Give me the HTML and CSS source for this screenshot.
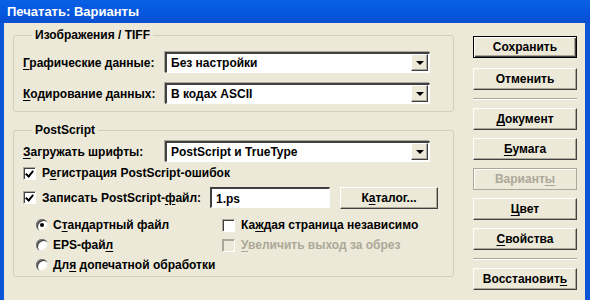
FILE: index.html
```html
<!DOCTYPE html>
<html lang="ru">
<head>
    <meta charset="UTF-8">
    <title>Печатать: Варианты</title>
    <link rel="stylesheet" href="styles.css">
</head>
<body>
    <div class="window">
        <div class="titlebar">Печатать: Варианты</div>
        <div class="client">
            <div class="groups">
                <fieldset class="group group-tiff">
                    <legend>Изображения / TIFF</legend>
                    <div class="row">
                        <span class="label"><u>Г</u>рафические данные:</span>
                        <div class="combo"><span>Без настройки</span><i class="arrow"></i></div>
                    </div>
                    <div class="row row-second">
                        <span class="label"><u>К</u>одирование данных:</span>
                        <div class="combo"><span>В кодах ASCII</span><i class="arrow"></i></div>
                    </div>
                </fieldset>

                <fieldset class="group group-ps">
                    <legend>PostScript</legend>
                    <div class="row">
                        <span class="label"><u>З</u>агружать шрифты:</span>
                        <div class="combo"><span>PostScript и TrueType</span><i class="arrow"></i></div>
                    </div>
                    <div class="check-row row-errors">
                        <span class="checkbox checked"></span>
                        <span>Р<u>е</u>гистрация PostScript-ошибок</span>
                    </div>
                    <div class="check-row row-file">
                        <span class="checkbox checked"></span>
                        <span class="file-label">Записать PostScript-<u>ф</u>айл:</span>
                        <div class="textbox">1.ps</div>
                        <div class="btn btn-catalog">К<u>а</u>талог...</div>
                    </div>
                    <div class="options">
                        <div class="option-col">
                            <div class="check-row"><span class="radio checked"></span><span>С<u>т</u>андартный файл</span></div>
                            <div class="check-row"><span class="radio"></span><span>EPS-фай<u>л</u></span></div>
                            <div class="check-row"><span class="radio"></span><span>Дл<u>я</u> допечатной обработки</span></div>
                        </div>
                        <div class="option-col option-right">
                            <div class="check-row"><span class="checkbox"></span><span>Ка<u>ж</u>дая страница независимо</span></div>
                            <div class="check-row disabled"><span class="checkbox"></span><span><u>У</u>величить выход за обрез</span></div>
                        </div>
                    </div>
                </fieldset>
            </div>

            <div class="buttons">
                <div class="btn btn-default">Сохранить</div>
                <div class="btn">Отменить</div>
                <div class="separator"></div>
                <div class="btn"><u>Д</u>окумент</div>
                <div class="btn"><u>Б</u>умага</div>
                <div class="btn btn-disabled">Вариант<u>ы</u></div>
                <div class="btn"><u>Ц</u>вет</div>
                <div class="btn"><u>С</u>войства</div>
                <div class="separator"></div>
                <div class="btn">Восстанови<span>т</span><u>ь</u></div>
            </div>
        </div>
    </div>
</body>
</html>
```

FILE: styles.css
```css
body {
    margin: 0;
    font-family: "Liberation Sans", Arial, sans-serif;
    font-size: 12px;
    font-weight: bold;
    color: #000;
    background: #ece9d8;
}
u {
    text-decoration: underline;
    text-underline-offset: 2px;
}
.window {
    width: 590px;
    height: 300px;
    display: flex;
    flex-direction: column;
    overflow: hidden;
}
.titlebar {
    height: 23px;
    box-sizing: border-box;
    padding: 4px 0 0 7px;
    background: linear-gradient(#0a60e4, #0556de 60%, #0a4fd0);
    color: #fff;
    font-size: 13px;
    line-height: 15px;
}
.client {
    flex: 1;
    display: flex;
    background: #ece9d8;
    border-left: 4px solid #0b55d9;
    border-right: 5px solid #0b55d9;
    padding: 5px 0 0 9px;
}

/* group boxes */
.groups {
    width: 441px;
}
.group {
    margin: 0;
    border: 1px solid #d0d0bf;
    border-radius: 3px;
    padding: 10px 0 7px 9px;
}
.group legend {
    margin-left: 9px;
    padding: 0 3px;
    line-height: 14px;
}
.group-ps {
    margin-top: 11px;
    padding-top: 4px;
    padding-bottom: 3px;
}
.row {
    display: flex;
    align-items: center;
    height: 21px;
}
.row-second {
    margin-top: 10px;
}
.label {
    width: 142px;
}

/* combo boxes */
.combo {
    position: relative;
    width: 265px;
    height: 21px;
    box-sizing: border-box;
    display: flex;
    align-items: center;
    padding-left: 4px;
    background: #fff;
    border-top: 2px solid #404040;
    border-left: 2px solid #404040;
    border-right: 1px solid #fff;
    border-bottom: 1px solid #fff;
    box-shadow: -1px -1px 0 #aca899;
}
.arrow {
    position: absolute;
    right: 1px;
    top: 0;
    width: 17px;
    height: 17px;
    box-sizing: border-box;
    background: #ece9d8;
    border-top: 1px solid #fff;
    border-left: 1px solid #fff;
    border-right: 1px solid #404040;
    border-bottom: 1px solid #404040;
    box-shadow: inset -1px -1px 0 #aca899;
}
.arrow::after {
    content: "";
    position: absolute;
    left: 4px;
    top: 6px;
    border-left: 4px solid transparent;
    border-right: 4px solid transparent;
    border-top: 4px solid #000;
}

/* check boxes and radios */
.check-row {
    display: flex;
    align-items: center;
    height: 16px;
}
.row-errors {
    margin-top: 3px;
}
.row-file {
    margin-top: 6px;
    height: 21px;
}
.checkbox {
    position: relative;
    width: 13px;
    height: 13px;
    box-sizing: border-box;
    margin-right: 6px;
    background: #fff;
    border-top: 1px solid #aca899;
    border-left: 1px solid #aca899;
    border-right: 1px solid #fff;
    border-bottom: 1px solid #fff;
    box-shadow: inset 1px 1px 0 #404040;
}
.checkbox.checked::after {
    content: "";
    position: absolute;
    left: 3px;
    top: 1px;
    width: 3px;
    height: 6px;
    border-right: 2px solid #000;
    border-bottom: 2px solid #000;
    transform: rotate(40deg);
}
.radio {
    position: relative;
    width: 12px;
    height: 12px;
    margin-right: 5px;
    border-radius: 50%;
    background: #fff;
    box-shadow: inset 1px 1px 0 #808080, inset 2px 2px 0 #404040, inset -1px -1px 0 #ece9d8;
}
.radio.checked::after {
    content: "";
    position: absolute;
    left: 4px;
    top: 4px;
    width: 4px;
    height: 4px;
    border-radius: 50%;
    background: #000;
}
.file-label {
    width: 168px;
}
.textbox {
    width: 120px;
    height: 21px;
    box-sizing: border-box;
    padding: 3px 0 0 4px;
    font-size: 12px;
    background: #fff;
    border-top: 2px solid #404040;
    border-left: 2px solid #404040;
    border-right: 1px solid #fff;
    border-bottom: 1px solid #fff;
}
.options {
    display: flex;
    margin-top: 9px;
    padding-left: 13px;
}
.option-col {
    display: flex;
    flex-direction: column;
    gap: 4px;
    width: 186px;
}
.option-right {
    width: auto;
}
.disabled {
    color: #aca899;
}
.disabled .checkbox {
    background: #ece9d8;
    box-shadow: inset 1px 1px 0 #aca899;
}

/* buttons */
.buttons {
    display: flex;
    flex-direction: column;
    gap: 8px;
    margin-left: 19px;
    padding-top: 8px;
    width: 104px;
}
.btn {
    height: 22px;
    box-sizing: border-box;
    display: flex;
    align-items: center;
    justify-content: center;
    background: #ece9d8;
    border-top: 1px solid #fff;
    border-left: 1px solid #fff;
    border-right: 1px solid #404040;
    border-bottom: 1px solid #404040;
    box-shadow: inset -1px -1px 0 #aca899;
}
.btn-default {
    border: 1px solid #000;
    box-shadow: inset 1px 1px 0 #fff, inset -1px -1px 0 #404040, inset -2px -2px 0 #aca899;
}
.buttons .btn-default + .btn {
    margin-top: 2px;
}
.btn-disabled {
    color: #aca899;
    border: 1px solid #aca899;
    box-shadow: inset 1px 1px 0 #fff;
}
.separator {
    height: 0;
    border-top: 1px solid #aca899;
    border-bottom: 1px solid #fff;
}
.btn-catalog {
    width: 98px;
    margin-left: 10px;
}
```
